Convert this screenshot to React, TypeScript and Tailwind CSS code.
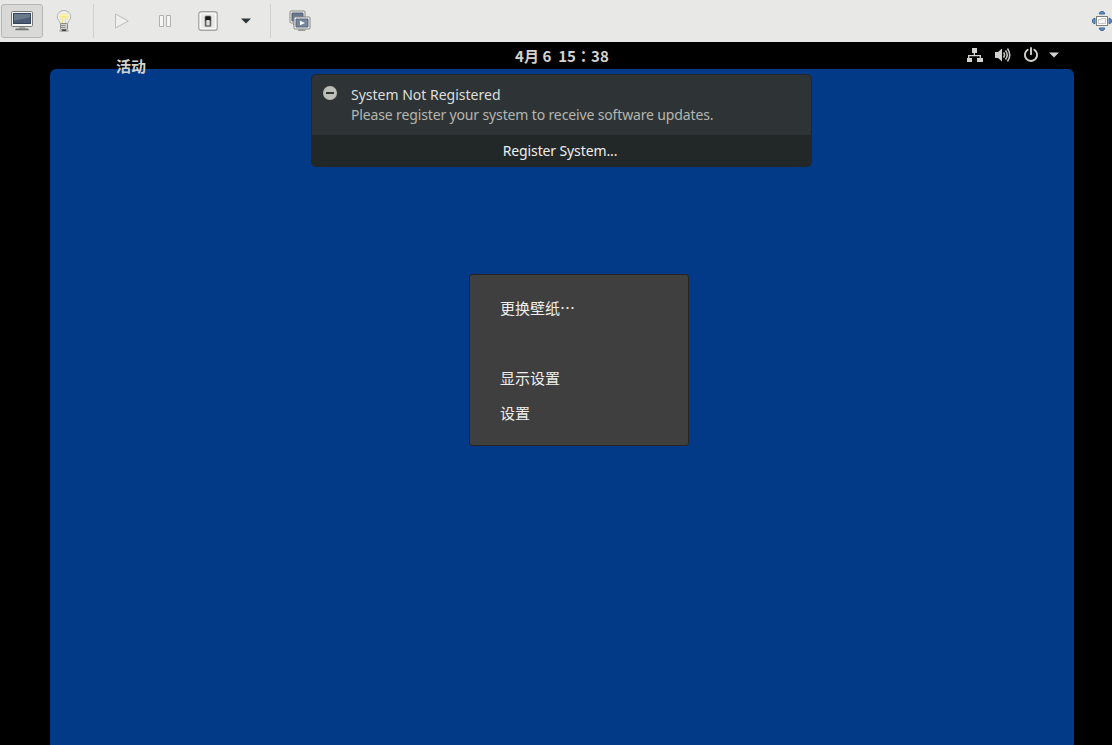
import React from 'react';

const MonitorIcon = () => (
  <svg width="24" height="22" viewBox="0 0 24 22">
    <rect x="1.500" y="1.500" width="21" height="15" rx="1.200" fill="#f4f4f2" stroke="#777974" />
    <rect x="3" y="3" width="18" height="11" fill="#4c5c74" />
    <path d="M3 3h18v4L3 11z" fill="#6b798d" />
    <path d="M3.500 13.500v-10h17v10z" fill="none" stroke="#35445b" />
    <path d="M9 17h6v2H9z" fill="#aaaca8" />
    <path d="M6 18.500h12l1 1.700H5z" fill="#70726e" />
  </svg>
);

const BulbIcon = () => (
  <svg width="18" height="24" viewBox="0 0 18 24">
    <ellipse cx="9" cy="21.700" rx="5" ry="1.300" fill="#b4b4af" />
    <path d="M9 1.500c-4.200 0-6.700 3-6.700 6.400 0 3 2.700 4.400 3.200 7.100h7c.5-2.700 3.200-4.100 3.200-7.100C15.700 4.500 13.200 1.500 9 1.500z" fill="#ecece4" stroke="#b2b2ae" />
    <ellipse cx="9" cy="7.500" rx="4.600" ry="2.800" fill="#f8f3a8" />
    <path d="M5.500 7l1.500 1.700L9 7.300l2 1.400L12.500 7M7.500 9v5M10.500 9v5" fill="none" stroke="#efe47c" />
    <rect x="5.500" y="14.500" width="7" height="6" rx="1" fill="#d2d3cf" stroke="#858782" />
    <path d="M5.500 16.500h5M5.500 18.500h5" stroke="#8f918c" />
    <path d="M7 21.300h4" stroke="#444" strokeWidth="1.500" />
  </svg>
);

const PlayIcon = () => (
  <svg width="16" height="18" viewBox="0 0 16 18">
    <path d="M1.500 2v14L14.300 9z" fill="#f0f0ef" stroke="#bcbcba" strokeLinejoin="round" />
  </svg>
);

const PauseIcon = () => (
  <svg width="14" height="14" viewBox="0 0 14 14">
    <path d="M1.500 1.500h4v11h-4zM8.500 1.500h4v11h-4z" fill="#f7f7f6" stroke="#b0b1ae" />
  </svg>
);

const SwitchIcon = () => (
  <svg width="20" height="20" viewBox="0 0 20 20">
    <rect x=".75" y=".75" width="18.500" height="18.500" rx="2.300" fill="#fafafa" stroke="#a6a7a3" strokeWidth="1.300" />
    <rect x="3" y="3" width="14" height="14" rx="1" fill="#e9e9e7" />
    <rect x="7" y="5" width="6" height="10.500" rx="1" fill="#42423f" stroke="#888883" strokeWidth=".8" />
    <path d="M7.500 5.500h5V10h-5z" fill="#1b1b1b" />
    <path d="M8.300 9h3.400v5.500H8.300z" fill="#dededb" />
  </svg>
);

const ConsolesIcon = () => (
  <svg width="22" height="22" viewBox="0 0 22 22">
    <rect x="1" y="1" width="15" height="12" rx="1" fill="#f5f5f3" stroke="#858782" />
    <path d="M3 3h11v8H3z" fill="#68798f" stroke="#4c5d75" />
    <path d="M4 14.500h4" stroke="#8b8d88" strokeWidth="1.500" />
    <rect x="5" y="7" width="16" height="12" rx="1" fill="#f5f5f3" stroke="#858782" />
    <path d="M7 9h12v8H7z" fill="#76869b" stroke="#56677e" />
    <path d="M11 10.700v4.600l5-2.300z" fill="#fff" />
    <path d="M10 19.500h6v1H9" fill="none" stroke="#999b97" />
  </svg>
);

const ResizeIcon = () => (
  <svg width="22" height="22" viewBox="0 0 22 22">
    <g fill="#7094c5" stroke="#35639f">
      <path d="M8.300 4c0-1.500 1-2.500 2.700-2.500s2.700 1 2.700 2.500z" />
      <path d="M8.300 18c0 1.500 1 2.500 2.700 2.500s2.700-1 2.700-2.500z" />
      <path d="M4 8.300c-1.500 0-2.500 1-2.500 2.700s1 2.700 2.500 2.700z" />
      <path d="M18 8.300c1.500 0 2.500 1 2.500 2.700s-1 2.700-2.500 2.700z" />
    </g>
    <rect x="5.500" y="6.500" width="11" height="9" fill="#fff" stroke="#7b7d78" />
    <path d="M7.500 9.500v4h7v-5h-4v1z" fill="#fafafa" stroke="#c3c3bf" />
  </svg>
);

const NetworkIcon = () => (
  <svg width="16" height="16" viewBox="0 0 16 16" fill="#d3d3cf">
    <path d="M5 1h5v5H8v2h6v3h2v4h-6v-4h2.700V9.300H2.300V11H5v4H0v-4h1V8h5.700V6H5z" />
  </svg>
);

const VolumeIcon = () => (
  <svg width="16" height="16" viewBox="0 0 16 16">
    <path d="M0 5h3l4-3.500v13L3 11H0z" fill="#d3d3cf" />
    <path d="M8.500 5.500q2 2.500 0 5M10.500 3.500q3.500 4.500 0 9M12.500 1.500q4.500 6.500 0 13" fill="none" stroke="#c3c3bf" strokeWidth="1.600" />
  </svg>
);

const PowerIcon = () => (
  <svg width="16" height="16" viewBox="0 0 16 16" fill="none" stroke="#d3d3cf" strokeWidth="1.900" strokeLinecap="round">
    <path d="M8 1v6.300M4.700 2.700a6.100 6.100 0 1 0 6.600 0" />
  </svg>
);

const Divider = () => <div className="h-[34px] w-px bg-[#d0d0ce]" />;

const Toolbar = () => (
  <header className="flex h-[42px] shrink-0 items-center bg-[#e8e8e7]">
    <button className="ml-px flex h-[34px] w-[42px] items-center justify-center rounded-[3px] border border-[#b6b6b3] bg-[#d9d9d7]">
      <MonitorIcon />
    </button>
    <button className="ml-3 flex w-[18px] justify-center"><BulbIcon /></button>
    <div className="ml-5"><Divider /></div>
    <button className="ml-5"><PlayIcon /></button>
    <button className="ml-[28px]"><PauseIcon /></button>
    <button className="ml-[26px]"><SwitchIcon /></button>
    <button className="ml-[23px]">
      <svg width="10" height="6" viewBox="0 0 10 6"><path d="M0 .5h10l-5 5z" fill="#2e3436" /></svg>
    </button>
    <div className="ml-[19px]"><Divider /></div>
    <button className="ml-[18px]"><ConsolesIcon /></button>
    <button className="-mr-px ml-auto"><ResizeIcon /></button>
  </header>
);

const TopBar = () => (
  <div className="relative flex h-[27px] shrink-0 items-center justify-between pr-[53px] text-[#d3d3cf]">
    {/* activities label hangs over the edge of the desktop */}
    <span className="absolute left-[116px] top-[13px] z-10 text-[15px] font-bold leading-[22px]">活动</span>
    <div className="ml-[515px] whitespace-pre text-[15px] font-bold leading-[22px] tracking-[0.05px]">
      4月 6  15<span className="font-['Noto_Sans_CJK_TC']">：</span>38
    </div>
    <div className="flex items-center pb-px">
      <NetworkIcon />
      <div className="ml-3"><VolumeIcon /></div>
      <div className="ml-3"><PowerIcon /></div>
      <svg className="ml-[10px]" width="10" height="6" viewBox="0 0 10 6"><path d="M0 .5h10l-5 5z" fill="#d3d3cf" /></svg>
    </div>
  </div>
);

const Notification = () => (
  <section className="ml-[261px] mt-[5px] h-[93px] w-[501px] overflow-hidden rounded-[5px] border border-[#222828] bg-[#2e3436] font-['Noto_Sans']">
    <div className="flex h-[60px] pl-[11px] pt-[10px]">
      <svg className="mt-px" width="14" height="14" viewBox="0 0 14 14">
        <circle cx="7" cy="7" r="7" fill="#bebeb9" />
        <path d="M3 7h8" stroke="#2e3436" strokeWidth="2" />
      </svg>
      <div className="ml-[14px] text-[14px] leading-5">
        <h2 className="w-max text-[#dedfdd]">System Not Registered</h2>
        <p className="w-max tracking-[-0.14px] text-[#b5b6b0]">Please register your system to receive software updates.</p>
      </div>
    </div>
    <button className="flex h-[31px] w-full items-center justify-center bg-[#222728] pr-[3px] text-[14px] tracking-[-0.12px] text-[#eeeeec]">Register System...</button>
  </section>
);

const menuItems = ['更换壁纸⋯', '', '显示设置', '设置'];

const DesktopMenu = () => (
  <ul className="ml-[419px] mt-[107px] h-[172px] w-[220px] rounded-[3px] border border-[#242424] bg-[#3f3f40] pl-[30px] pt-[15px] text-[15px] text-[#eeeeec]">
    {menuItems.map((item, i) => (
      <li key={i} className="h-[35px] leading-[35px]">{item}</li>
    ))}
  </ul>
);

export default function App() {
  return (
    <div className="flex h-screen flex-col overflow-hidden bg-black font-['Noto_Sans_CJK_SC',sans-serif]">
      <Toolbar />
      <TopBar />
      <main className="ml-[50px] mr-[38px] flex flex-1 flex-col rounded-t-[6px] bg-[#023a87]">
        <Notification />
        <DesktopMenu />
      </main>
    </div>
  );
}
